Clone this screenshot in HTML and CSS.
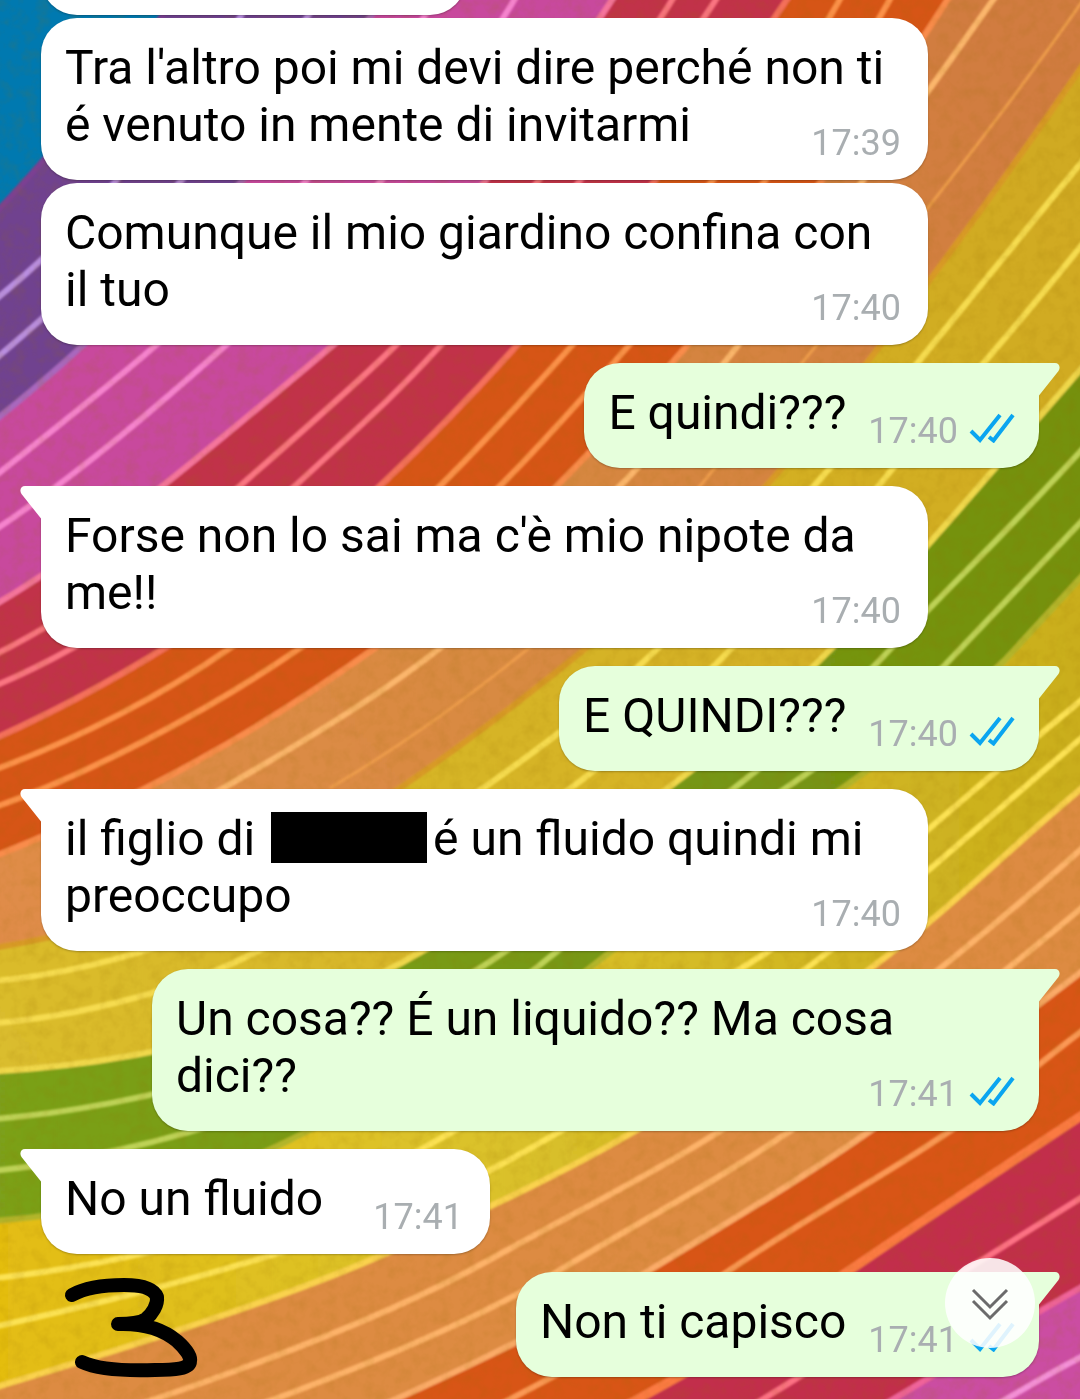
FILE: index.html
```html
<!DOCTYPE html>
<html lang="it">
<head>
<meta charset="utf-8">
<meta name="viewport" content="width=device-width, initial-scale=1">
<title>Chat</title>
<link rel="stylesheet" href="styles.css">
</head>
<body>
<svg class="wallpaper" viewBox="0 0 1080 1399" preserveAspectRatio="xMidYMid slice" aria-hidden="true">
  <defs>
    <filter id="grain" x="0" y="0" width="100%" height="100%">
      <feTurbulence type="fractalNoise" baseFrequency="0.08" numOctaves="3" seed="4"/>
      <feColorMatrix values="0 0 0 0 0.3  0 0 0 0 0.15  0 0 0 0 0  1.2 0 0 0 -0.5"/>
    </filter>
    <filter id="soft"><feGaussianBlur stdDeviation="1"/></filter>
    <linearGradient id="tan" x1="0" y1="1" x2="1" y2="0"><stop offset="0" stop-color="#e58e4c"/><stop offset=".5" stop-color="#d88a42"/><stop offset="1" stop-color="#d07a40"/></linearGradient>
    <linearGradient id="yellow" x1="0" y1="1" x2="1" y2="0"><stop offset="0" stop-color="#dcc030"/><stop offset=".5" stop-color="#d6b426"/><stop offset="1" stop-color="#cfa822"/></linearGradient>
    <linearGradient id="gold" x1="0" y1="0" x2="1" y2="0"><stop offset="0" stop-color="#e4bd10"/><stop offset=".4" stop-color="#dcc32c"/><stop offset="1" stop-color="#c9ad1c"/></linearGradient>
    <linearGradient id="green" x1="0" y1="0" x2="1" y2="0"><stop offset="0" stop-color="#7ba11a"/><stop offset="1" stop-color="#74900f"/></linearGradient>
  </defs>
  <rect width="1080" height="1399" fill="#0079b0"/>
  <g stroke-width="6" filter="url(#soft)">
    <path fill="#6f428f" stroke="#7b3f92" d="M-20,228C10,200 90,110 162,16L180,-20H1120V1450H-20Z"/>
    <path fill="#c84a9d" stroke="#a868bd" d="M-20,432C100,340 200,230 241,182S350,50 395,-20H1120V1450H-20Z"/>
    <path fill="#c13049" stroke="#f5749c" d="M-20,613C80,560 220,440 332,346S540,110 625,-20H1120V1450H-20Z"/>
    <path fill="#d65512" stroke="#f5705c" d="M-20,745C130,680 280,580 380,486S640,220 800,-20H1120V1450H-20Z"/>
    <path fill="url(#tan)" stroke="#f98c4b" d="M-20,862C140,800 260,730 375,648S760,300 960,-20H1120V1450H-20Z"/>
    <path fill="url(#yellow)" stroke="#d89a28" d="M-20,950C120,930 280,870 400,788S700,560 767,485S980,220 1120,10V1450H-20Z"/>
    <path fill="url(#green)" stroke="#f0d84c" d="M-20,1072C140,1065 280,1030 403,962S720,760 820,660S1000,460 1120,325V1450H-20Z"/>
    <path fill="url(#gold)" stroke="#b2b52c" d="M-20,1222C100,1215 200,1185 290,1140S500,1040 600,960S900,760 1005,660L1120,535V1450H-20Z"/>
    <path fill="#dd8b43" stroke="#fad24e" d="M-20,1392C120,1350 280,1300 380,1256S560,1175 635,1131S860,980 928,923S1040,820 1120,757V1450H-20Z"/>
    <path fill="#d85415" stroke="#fbab68" d="M300,1440C400,1400 560,1325 650,1270S800,1180 870,1131S1030,1010 1120,943V1450H300Z"/>
    <path fill="#c22f4b" stroke="#fb7a42" stroke-width="9" d="M560,1440C660,1390 770,1325 850,1270S1000,1170 1120,1090V1450H560Z"/>
    <path fill="#cb4da2" stroke="#f0649a" d="M820,1440C900,1400 1000,1330 1120,1266V1450H820Z"/>
  </g>
  <g fill="none" stroke-width="6" filter="url(#soft)">
    <g stroke="#b98ee0">
      <path d="M-20,312C40,265 80,225 115,182S220,60 255,-10"/>
      <path d="M-20,372C60,305 130,240 180,182S280,60 325,-10"/>
    </g>
    <g stroke="#f583cd">
      <path d="M-20,488C60,425 110,385 155,346S270,225 305,182S400,60 440,-10"/>
      <path d="M-20,540C80,475 170,395 225,346S340,230 380,182S480,60 520,-10"/>
    </g>
    <g stroke="#fa7481">
      <path d="M-20,662C80,615 190,530 240,486S350,390 395,346S620,90 678,-10"/>
      <path d="M-20,692C100,645 220,555 295,486S395,395 440,346S660,90 722,-10"/>
    </g>
    <g stroke="#fb9148">
      <path d="M-20,775C80,740 170,690 230,648S380,545 440,486S760,150 845,-10"/>
      <path d="M-20,812C80,780 210,710 300,648S440,545 500,486S810,150 895,-10"/>
    </g>
    <g stroke="#fbb66c">
      <path d="M120,845C160,825 350,720 440,648S560,545 620,486S860,190 1000,-10"/>
      <path stroke="#ed9c4c" stroke-width="3" d="M330,788C480,700 640,560 700,486S960,180 1090,-10"/>
    </g>
    <g stroke="#f6dc50">
      <path d="M390,850C500,780 580,720 640,665S780,525 830,468S980,285 1100,140"/>
      <path d="M480,850C570,795 660,720 720,660S840,535 885,478S1000,350 1100,222"/>
      <path d="M-20,982C50,978 130,958 190,935S300,890 370,850"/>
      <path d="M-20,1024C60,1020 170,995 250,955S400,880 480,820"/>
    </g>
    <g stroke="#bdd256">
      <path d="M-20,1120C140,1110 360,1050 500,955S790,755 880,660S1000,540 1100,430"/>
      <path d="M-20,1172C140,1160 400,1080 540,965S860,750 945,665L1100,502"/>
    </g>
    <g stroke="#fce253">
      <path d="M-20,1280C120,1265 280,1230 420,1150S700,1000 800,930S940,815 1100,685"/>
      <path d="M-20,1330C140,1295 360,1240 500,1165S780,990 850,935S980,825 1100,722"/>
    </g>
    <g stroke="#fdb269">
      <path d="M60,1430C220,1380 380,1320 480,1265S650,1175 720,1131S960,960 1100,832"/>
      <path d="M190,1430C330,1380 460,1330 560,1270S710,1185 790,1131S1010,970 1100,892"/>
      <path stroke="#fb9854" d="M450,1430C560,1375 650,1325 730,1270S870,1185 950,1131S1040,1060 1100,1018"/>
      <path stroke="#fd7184" d="M710,1430C800,1380 900,1310 990,1255L1100,1186"/>
      <path stroke="#f490d8" d="M950,1430C1010,1400 1050,1370 1100,1348"/>
    </g>
  </g>
  <rect width="1080" height="1399" filter="url(#grain)" opacity=".25"/>
  <symbol id="tail" viewBox="0 0 22 34"><path d="M22,0H5C1,0 -1,4 1.500,8L21,32.500L22,34Z"/></symbol>
  <symbol id="ticks" viewBox="0 0 46 30"><g fill="none" stroke="#0aa5f0" stroke-width="4"><path d="M2,18L11,27L31,2"/><path d="M20,24L24.500,27.500L44,2"/></g></symbol>
</svg>

<main class="chat">
  <div class="bubble in clipped"></div>

  <article class="bubble in long">
    <p>Tra l'altro poi mi devi dire perché non ti é venuto in mente di invitarmi</p>
    <div class="meta"><time>17:39</time></div>
  </article>

  <article class="bubble in long">
    <p>Comunque il mio giardino confina con il&nbsp;tuo</p>
    <div class="meta"><time>17:40</time></div>
  </article>

  <article class="bubble out first">
    <svg class="tail"><use href="#tail"/></svg>
    <p>E quindi???</p>
    <div class="meta"><time>17:40</time><svg class="ticks"><use href="#ticks"/></svg></div>
  </article>

  <article class="bubble in first long">
    <svg class="tail"><use href="#tail"/></svg>
    <p>Forse non lo sai ma c'è mio nipote da me!!</p>
    <div class="meta"><time>17:40</time></div>
  </article>

  <article class="bubble out first">
    <svg class="tail"><use href="#tail"/></svg>
    <p>E QUINDI???</p>
    <div class="meta"><time>17:40</time><svg class="ticks"><use href="#ticks"/></svg></div>
  </article>

  <article class="bubble in first long">
    <svg class="tail"><use href="#tail"/></svg>
    <p>il figlio di <span class="redacted"></span>é un fluido quindi mi preoccupo</p>
    <div class="meta"><time>17:40</time></div>
  </article>

  <article class="bubble out first long">
    <svg class="tail"><use href="#tail"/></svg>
    <p>Un cosa?? É un liquido?? Ma cosa dici??</p>
    <div class="meta"><time>17:41</time><svg class="ticks"><use href="#ticks"/></svg></div>
  </article>

  <article class="bubble in first">
    <svg class="tail"><use href="#tail"/></svg>
    <p>No un fluido</p>
    <div class="meta"><time>17:41</time></div>
  </article>

  <article class="bubble out first">
    <svg class="tail"><use href="#tail"/></svg>
    <p>Non ti capisco</p>
    <div class="meta"><time>17:41</time><svg class="ticks"><use href="#ticks"/></svg></div>
  </article>

  <svg class="scribble" viewBox="60 1272 144 112" aria-hidden="true">
    <path d="M72,1295C88,1286 108,1285 124,1285C144,1285 154,1289 157,1297C158,1305 152,1314 146,1319C140,1323 132,1324 118,1324C146,1323 164,1330 177,1341C186,1349 191,1357 190,1361C190,1369 174,1370 155,1370C125,1371 97,1369 82,1362"/>
  </svg>
</main>

<button class="to-bottom" type="button" aria-label="Vai in fondo">
  <svg viewBox="0 0 90 90"><path d="M28,32L45,49L62,32M28,43L45,60L62,43"/></svg>
</button>
</body>
</html>
```
FILE: styles.css
```css
* {
  box-sizing: border-box;
}

body {
  margin: 0;
  overflow-x: hidden;
  background: #d8892f;
  color: #000;
  font-family: Roboto, "Noto Sans", sans-serif;
  font-size: 48px;
  line-height: 57px;
}

.wallpaper {
  position: fixed;
  inset: 0;
  z-index: -1;
  width: 100%;
  height: 100%;
}

.chat {
  position: relative;
  display: flex;
  flex-direction: column;
  align-items: flex-start;
  gap: 3px;
  padding: 0 41px 22px;
  overflow: hidden;
}

.bubble {
  position: relative;
  display: grid;
  grid-template-columns: auto auto;
  max-width: calc(100% - 111px);
  padding: 21px 27px 27px 24px;
  border-radius: 36px;
  background: #fff;
  box-shadow: 0 1px 2px rgba(0, 0, 0, 0.25);
}

.bubble p {
  margin: 0;
}

.in {
  column-gap: 50px;
}

.out {
  align-self: flex-end;
  column-gap: 22px;
  padding-right: 24px;
  background: #e6ffdc;
}

.first {
  margin-top: 15px;
}

.in.first {
  border-top-left-radius: 0;
}

.out.first {
  border-top-right-radius: 0;
}

/* Long messages share one cell with their time, which sits under the first line. */
.long {
  grid-template-columns: auto;
}

.long > p,
.long > .meta {
  grid-area: 1 / 1;
}

.clipped {
  width: 425px;
  height: 75px;
  margin-top: -60px;
}

.meta {
  display: flex;
  align-items: flex-start;
  align-self: end;
  justify-self: end;
  gap: 11px;
  margin-bottom: -11px;
  color: #a9aeb1;
  font-size: 36px;
  line-height: 42px;
}

.ticks {
  width: 46px;
  height: 30px;
  margin-top: 3px;
}

.tail {
  position: absolute;
  top: 0;
  left: -21px;
  width: 22px;
  height: 34px;
  fill: #fff;
}

.out .tail {
  right: -21px;
  left: auto;
  fill: #e6ffdc;
  transform: scaleX(-1);
}

.redacted {
  display: inline-block;
  width: 156px;
  height: 51px;
  margin: 0 6px 0 4px;
  background: #000;
  vertical-align: -8px;
}

.scribble {
  position: absolute;
  bottom: 15px;
  left: 60px;
  width: 144px;
  height: 112px;
  fill: none;
  stroke: #000;
  stroke-width: 14px;
  stroke-linecap: round;
  stroke-linejoin: round;
}

.to-bottom {
  position: fixed;
  right: 45px;
  bottom: 51px;
  width: 90px;
  height: 90px;
  padding: 0;
  border: 0;
  border-radius: 50%;
  background: rgba(255, 255, 255, 0.87);
}

.to-bottom svg {
  display: block;
  width: 90px;
  height: 90px;
  fill: none;
  stroke: #6b6b6b;
  stroke-width: 3px;
}
```
